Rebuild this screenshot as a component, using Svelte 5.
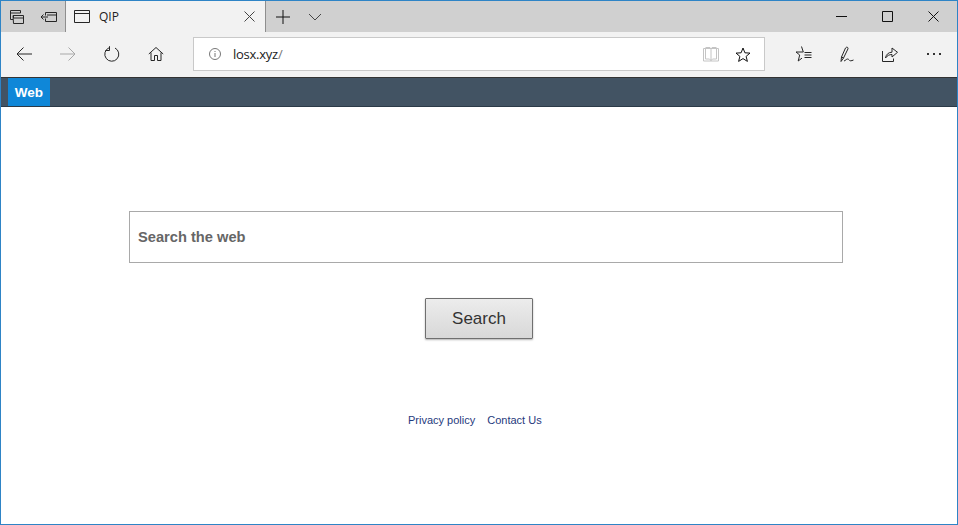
<script>
  let query = '';
</script>

<div class="window">
  <div class="tabbar">
    <div class="tab-tools">
      <button class="tool" aria-label="Tabs aside">
        <svg width="16" height="16" viewBox="0 0 16 16"><path d="M1.500 1.500h10v2.500h-10zM1.500 4v6.500h2.500M4 6.500h10.500v8H4.500zM4.500 6.500v2.500h10" /></svg>
      </button>
      <button class="tool tool2" aria-label="Set aside">
        <svg width="18" height="16" viewBox="0 0 18 16"><path d="M5.500 3.500h11v9h-11v-3M5.500 6.500v-3M7 6h9.500M8 8h-7M3.500 5.500l-2.500 2.500 2.500 2.500" /></svg>
      </button>
    </div>
    <div class="tab">
      <svg width="16" height="14" viewBox="0 0 16 14"><path d="M.5.500h15v12h-15zM.5 3.500h15" /></svg>
      <span class="tab-title">QIP</span>
      <svg class="tab-close" width="11" height="11" viewBox="0 0 11 11"><path d="M.5.500l10 10M10.500.500l-10 10" /></svg>
    </div>
    <div class="tab-add">
      <svg width="14" height="14" viewBox="0 0 14 14"><path class="dark" d="M7 0v14M0 7h14" /></svg>
      <svg class="chev" width="14" height="8" viewBox="0 0 14 8"><path d="M1 1l6 6 6-6" /></svg>
    </div>
    <div class="win-controls">
      <svg width="11" height="11" viewBox="0 0 11 11"><path class="dark" d="M0 5.500h11" /></svg>
      <svg width="11" height="11" viewBox="0 0 11 11"><path class="dark" d="M.5.500h10v10h-10z" /></svg>
      <svg width="11" height="11" viewBox="0 0 11 11"><path class="dark" d="M.5.500l10 10M10.500.500l-10 10" /></svg>
    </div>
  </div>

  <div class="toolbar">
    <div class="nav-btns">
      <svg width="16" height="14" viewBox="0 0 16 14"><path d="M16 7H1M7.500.5L1 7l6.500 6.500" /></svg>
      <svg class="disabled" width="16" height="14" viewBox="0 0 16 14"><path d="M0 7h15M8.500.5L15 7l-6.500 6.500" /></svg>
      <svg width="16" height="16" viewBox="0 0 16 16"><path d="M5 1.800a7 7 0 1 0 6 .2M5.500 .2v4.300h-4" /></svg>
      <svg width="16" height="16" viewBox="0 0 16 16"><path d="M.8 8L8 1.500 15.200 8M3 6.500v8h3.500v-5h3v5H13v-8" /></svg>
    </div>
    <div class="address">
      <svg class="info" width="12" height="12" viewBox="0 0 12 12"><circle cx="6" cy="6" r="5.500" /><path d="M6 5v4M6 3v1" /></svg>
      <span class="url">losx.xyz<span class="slash">/</span></span>
      <svg class="reader" width="16" height="15" viewBox="0 0 16 15"><path d="M.5 1.500h15v12.500h-15zM8 1.500v12.500M3 .5h4l1 1 1-1h4M2.500 .5v11.500h4l1.500 1.500 1.500-1.500h4v-11.500" /></svg>
      <svg class="star" width="16" height="15" viewBox="0 0 16 15"><path d="M8 1l1.900 4.800 5.100.3-3.900 3.300 1.300 5L8 11.600l-4.400 2.800 1.300-5L1 6.100l5.100-.3z" /></svg>
    </div>
    <div class="actions">
      <svg class="fav" width="17" height="16" viewBox="0 0 17 16"><path d="M6.500.5l1.800 5.500H1l3.700 3-1.500 6 3.800-2.900M9.500 6.500h7M9.500 9h7M9.500 11.500h7" /></svg>
      <svg class="pen" width="16" height="17" viewBox="0 0 16 17"><path d="M2 15.500l.5-4.500 4-9c.8-1.500 3-.8 2.500.8L4.500 12zM2.500 11l2 1M5 15c1.500-.5 2.500-2 3.500-2 1.500 0 2 2 3 1.800 1 0 2-.3 3-.8" /></svg>
      <svg class="share" width="16" height="15" viewBox="0 0 16 15"><path d="M.5 4v10.500h11v-3M3.500 11c.5-3.500 3-5.800 6.500-5.800V1l5.500 4.300L10 10V7.500c-2.500 0-4.800 1-6.500 3.500z" /></svg>
      <div class="dots"><i></i><i></i><i></i></div>
    </div>
  </div>

  <div class="sitebar">
    <span class="web">Web</span>
  </div>

  <main>
    <input class="search" type="text" placeholder="Search the web" bind:value={query} />
    <button class="go">Search</button>
    <div class="links">
      <a href="#privacy">Privacy policy</a>
      <a href="#contact">Contact Us</a>
    </div>
  </main>
</div>

<style>
  :global(body) {
    background: #fff;
  }
  .window {
    height: 525px;
    box-sizing: border-box;
    border: 1px solid #2e84c6;
    display: flex;
    flex-direction: column;
    overflow: hidden;
    font-family: "Open Sans", sans-serif;
  }
  svg {
    display: block;
    fill: none;
    stroke: #262626;
    stroke-width: 1;
    flex: none;
  }
  .dark {
    stroke: #111;
  }
  .tabbar {
    height: 31px;
    flex: none;
    display: flex;
    align-items: stretch;
    background: #d0d0d0;
  }
  .tab-tools {
    width: 64px;
    display: flex;
    align-items: center;
    padding-left: 8px;
    box-sizing: border-box;
  }
  .tool {
    border: 0;
    background: none;
    padding: 0;
  }
  .tool2 {
    margin-left: 15px;
  }
  .tab {
    width: 201px;
    box-sizing: border-box;
    background: #f2f2f2;
    border-left: 1px solid #8e8e8e;
    border-right: 1px solid #8e8e8e;
    display: flex;
    align-items: center;
    padding: 0 10px 0 8px;
  }
  .tab-title {
    margin-left: 9px;
    font-size: 12px;
    color: #222;
    flex: 1;
  }
  .tab-close {
    stroke: #444;
  }
  .tab-add {
    display: flex;
    align-items: center;
    padding-left: 10px;
    gap: 18px;
  }
  .chev {
    stroke: #444;
  }
  .win-controls {
    margin-left: auto;
    display: flex;
    align-items: center;
    gap: 35px;
    padding-right: 18px;
    padding-bottom: 1px;
  }
  .toolbar {
    height: 45px;
    flex: none;
    box-sizing: border-box;
    padding-bottom: 1px;
    background: #f2f2f2;
    display: flex;
    align-items: center;
  }
  .nav-btns {
    width: 192px;
    display: flex;
    align-items: center;
    padding-left: 15px;
    box-sizing: border-box;
    gap: 28px;
  }
  .disabled {
    stroke: #a8a8a8;
  }
  .address {
    width: 572px;
    height: 34px;
    box-sizing: border-box;
    background: #fff;
    border: 1px solid #c9c9c9;
    display: flex;
    align-items: center;
    padding: 0 13px 0 15px;
  }
  .info {
    stroke: #777;
  }
  .url {
    margin-left: 12px;
    font-size: 13px;
    color: #222;
    letter-spacing: -0.25px;
    flex: 1;
  }
  .slash {
    color: #777;
  }
  .reader {
    stroke: #c4c4c4;
  }
  .star {
    margin-left: 16px;
    stroke: #111;
  }
  .actions {
    flex: 1;
    display: flex;
    align-items: center;
    padding-left: 30px;
  }
  .pen {
    margin-left: 27px;
  }
  .share {
    margin-left: 27px;
  }
  .dots {
    display: flex;
    gap: 4px;
    margin-left: 29px;
  }
  .dots i {
    width: 2px;
    height: 2px;
    background: #333;
  }
  .sitebar {
    height: 30px;
    flex: none;
    box-sizing: border-box;
    background: #425363;
    border-top: 1px solid #333;
    border-bottom: 1px solid #2b3a48;
    padding-left: 7px;
    display: flex;
  }
  .web {
    width: 42px;
    background: #0f87d8;
    color: #fff;
    font: bold 13.5px "Liberation Sans", sans-serif;
    display: flex;
    align-items: center;
    justify-content: center;
  }
  main {
    flex: 1;
    display: flex;
    flex-direction: column;
    padding: 104px 0 0 128px;
  }
  .search {
    width: 714px;
    height: 52px;
    box-sizing: border-box;
    border: 1px solid #a9a9a9;
    padding: 0 8px;
    font: bold 14.67px "Liberation Sans", sans-serif;
    outline: none;
  }
  .search::placeholder {
    color: #666;
    opacity: 1;
  }
  .go {
    width: 108px;
    height: 41px;
    margin: 35px 0 0 296px;
    border: 1px solid #6f6f6f;
    border-radius: 1px;
    background: linear-gradient(#ececec, #d8d8d8);
    box-shadow: 0 1px 2px rgba(0, 0, 0, 0.3);
    font: 17px "Liberation Sans", sans-serif;
    color: #333;
    padding: 0;
  }
  .links {
    margin: 75px 0 0 279px;
    display: flex;
    gap: 12px;
    font: 11px "Liberation Sans", sans-serif;
  }
  .links a {
    color: #1f3a7d;
    text-decoration: none;
  }
</style>
